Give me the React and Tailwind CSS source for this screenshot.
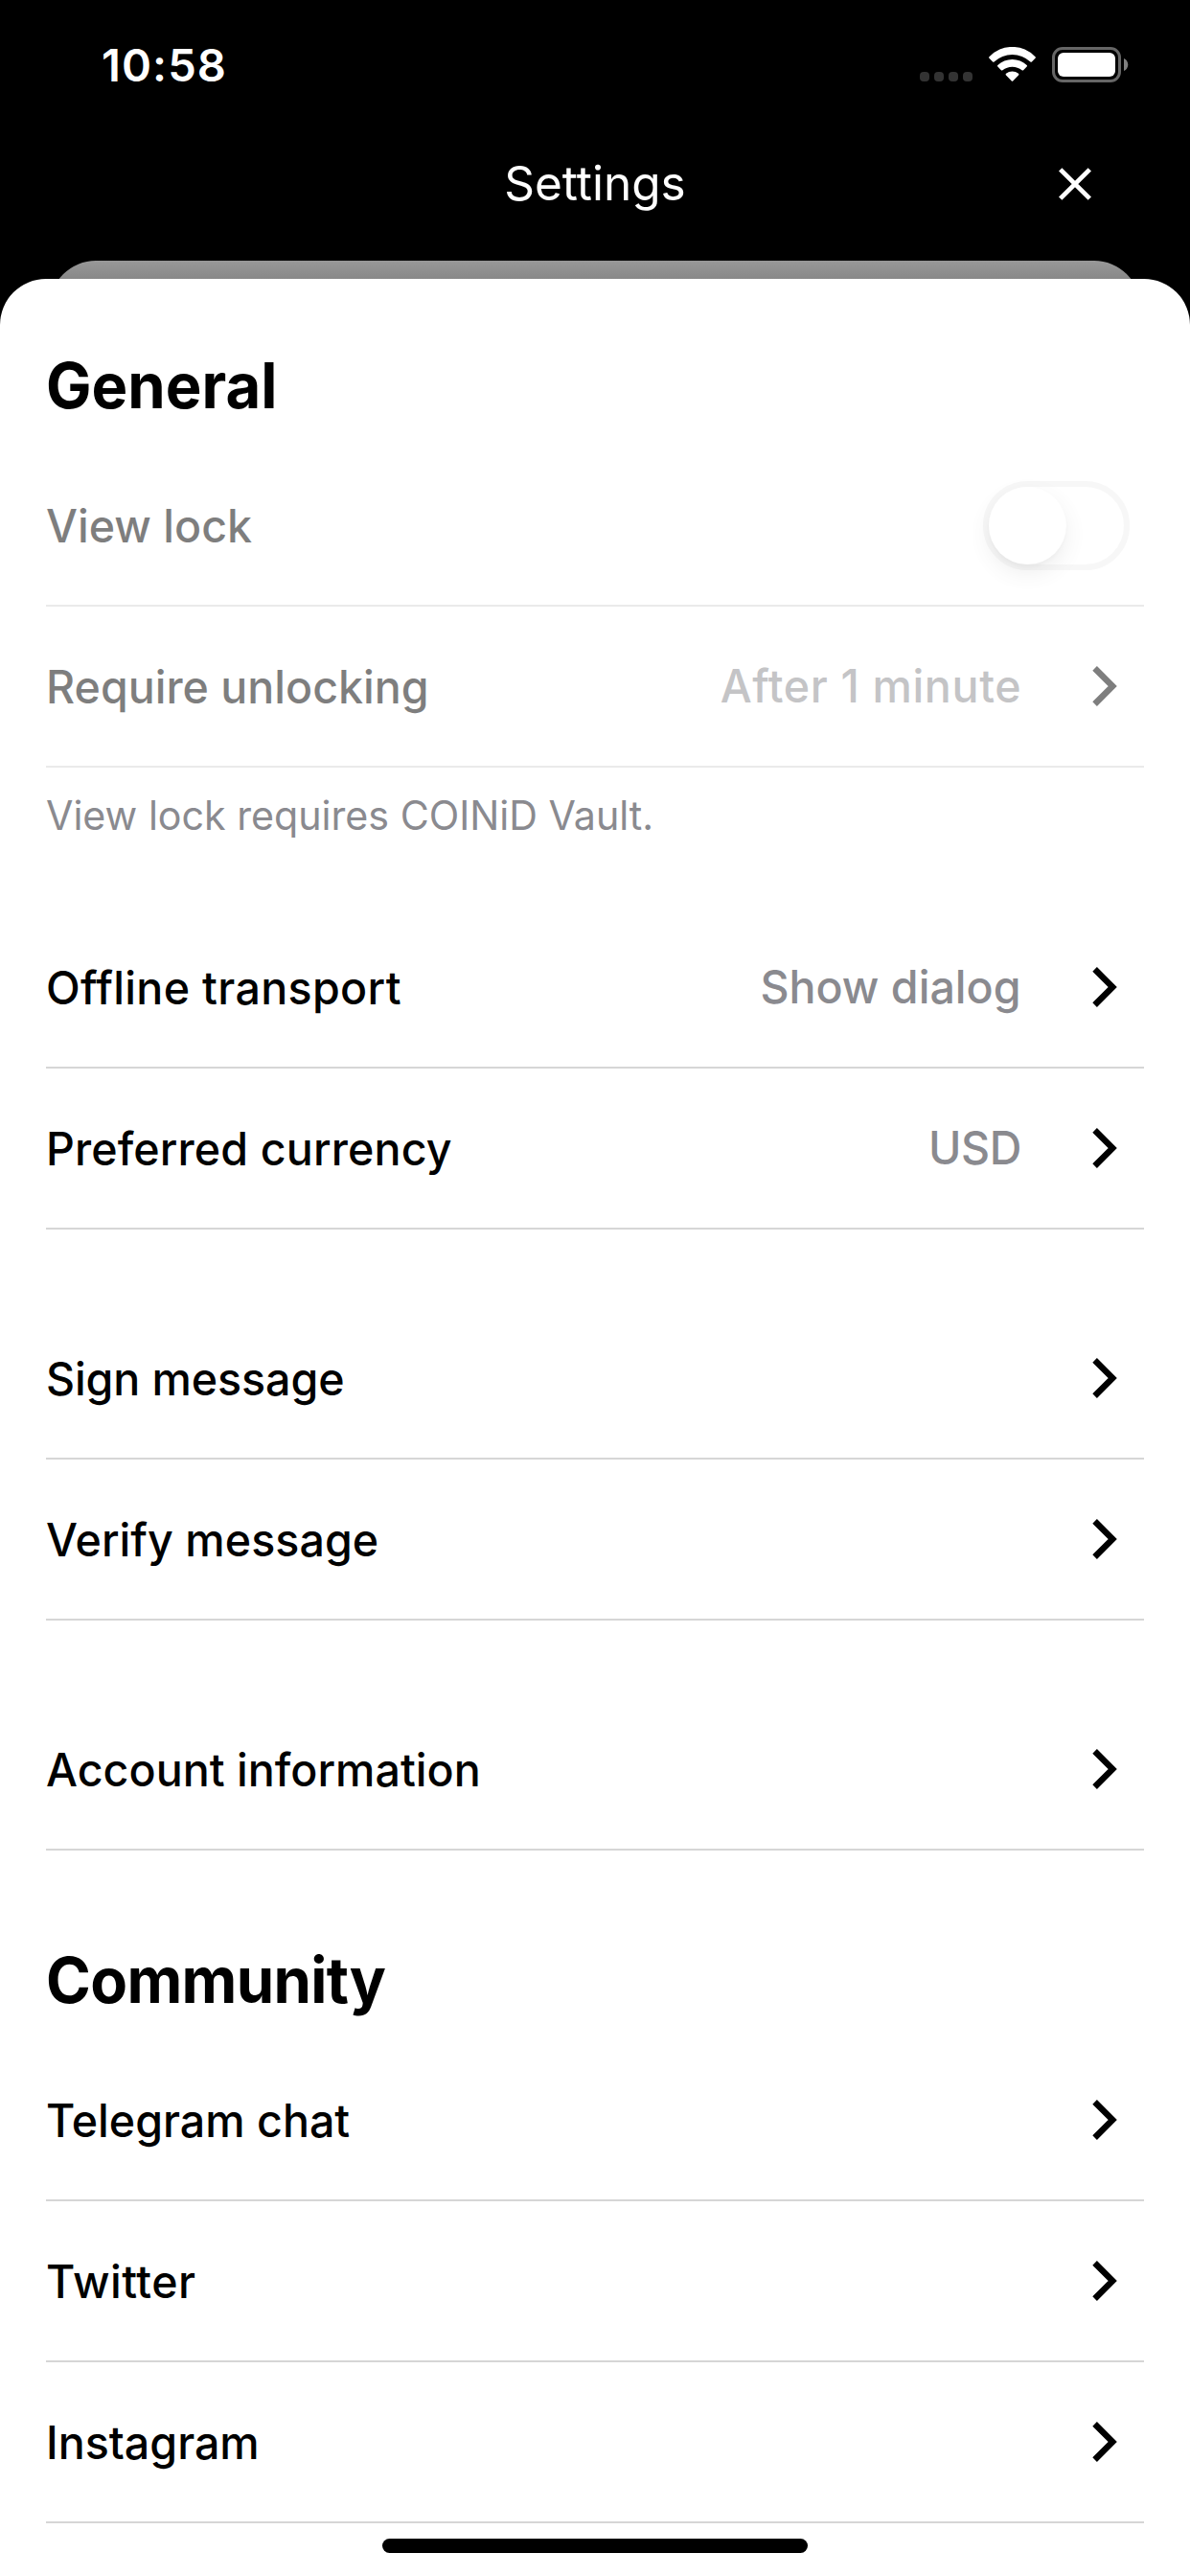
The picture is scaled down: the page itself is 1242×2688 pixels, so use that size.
function WifiIcon() {
  return (
    <svg width="49" height="36" viewBox="0 0 49 36" fill="#fff">
      <path d="M0.5 10.3A32.9 32.9 0 0 1 48.5 10.3Q49.3 11 48.5 11.8L44.9 15.4Q44.2 16.1 43.4 15.4A27.8 27.8 0 0 0 5.6 15.4Q4.8 16.1 4.1 15.4L0.5 11.8Q-0.3 11 0.5 10.3Z" />
      <path d="M9.3 19A22 22 0 0 1 39.7 19Q40.5 19.8 39.7 20.6L36.1 24.2Q35.4 24.9 34.6 24.2A16.2 16.2 0 0 0 14.4 24.2Q13.6 24.9 12.9 24.2L9.3 20.6Q8.5 19.8 9.3 19Z" />
      <path d="M18 27.8A10.2 10.2 0 0 1 31 27.8Q31.8 28.6 31 29.4L25.2 35.4Q24.5 36.1 23.8 35.4L18 29.4Q17.2 28.6 18 27.8Z" />
    </svg>
  );
}

function Battery() {
  return (
    <div className="flex items-center">
      <div className="h-[37px] w-[72px] rounded-[11px] border-[3px] border-[#666] p-[3px]">
        <div className="h-[25px] w-[60px] rounded-[6px] bg-white" />
      </div>
      <svg className="ml-[3px]" width="5" height="13" viewBox="0 0 5 13" fill="#808080">
        <path d="M0 0C2.6 1.1 4.3 3.6 4.3 6.5C4.3 9.4 2.6 11.9 0 13Z" />
      </svg>
    </div>
  );
}

function StatusBar() {
  return (
    <div className="flex h-[115px] items-start justify-between pl-[106px] pr-[64px]">
      <div className="pt-[39px] text-[47px] leading-[57px] font-semibold tracking-[1.1px]">10:58</div>
      <div className="flex items-start gap-[17px] pt-[49px]">
        <div className="mt-[26px] flex gap-[5px]">
          {[0, 1, 2, 3].map((dot) => (
            <div key={dot} className="size-[10px] rounded-[4px] bg-[#333]" />
          ))}
        </div>
        <WifiIcon />
        <Battery />
      </div>
    </div>
  );
}

function Header() {
  return (
    <div className="grid h-[157px] grid-cols-[1fr_auto_1fr] items-start">
      <div />
      <h1 className="pt-[46px] text-[49.5px] leading-[60px] font-normal">Settings</h1>
      <button className="mt-[59px] mr-[102px] justify-self-end">
        <svg width="36" height="36" viewBox="0 0 36 36" fill="none" stroke="#fff" strokeWidth="4.8">
          <path d="M2.7 2.9L33.3 33.1M33.3 2.9L2.7 33.1" />
        </svg>
      </button>
    </div>
  );
}

function Chevron() {
  return (
    <svg className="mt-[62px] mr-7 shrink-0" width="26" height="42" viewBox="0 0 26 42" fill="none" stroke="#000" strokeWidth="6.5">
      <path d="M2.6 2.4L21.2 21L2.6 39.6" />
    </svg>
  );
}

function Toggle() {
  return (
    <div className="mt-[37px] mr-[15px] h-[93px] w-[153px] rounded-full border-[6px] border-[#f0f0f0]">
      <div className="size-[81px] rounded-full bg-white shadow-[0_9px_20px_rgba(0,0,0,0.12),0_3px_3px_rgba(0,0,0,0.04)]" />
    </div>
  );
}

function Row({ label, spacing = "", value, valueSpacing = "", disabled = false, children }) {
  return (
    <div className={`flex h-[168px] items-start border-b-2 border-[#d6d6d6] ${disabled ? "opacity-50" : ""}`}>
      <div className={`mt-[54px] grow origin-left scale-x-97 text-[48px] leading-[59px] font-medium whitespace-nowrap ${spacing}`}>
        {label}
      </div>
      {value && (
        <div className={`mt-[53px] mr-[74px] origin-right scale-x-97 text-[48px] leading-[59px] font-medium whitespace-nowrap text-[#8a8a8f] ${valueSpacing}`}>
          {value}
        </div>
      )}
      {children || <Chevron />}
    </div>
  );
}

export default function App() {
  return (
    <div className="relative flex h-[2688px] w-[1242px] flex-col overflow-hidden bg-black font-[Inter,sans-serif] text-white">
      <StatusBar />
      <Header />
      <div className="mx-[52px] h-[67px] shrink-0 rounded-t-[48px] bg-linear-to-b from-[#989898] from-0% to-[#888] to-[19px]" />
      <main className="-mt-12 grow rounded-t-[48px] bg-white px-12 pt-[71px] text-black">
        <h2 className="mb-[23px] origin-left scale-x-96 text-[66px] leading-[80px] font-bold">General</h2>
        <Row label="View lock" disabled>
          <Toggle />
        </Row>
        <Row label="Require unlocking" value="After 1 minute" valueSpacing="tracking-[0.65px]" disabled />
        <p className="mt-6 origin-left scale-x-98 text-[42px] leading-[51px] text-[#8a8a8f]">View lock requires COINiD Vault.</p>

        <section className="mt-[71px]">
          <Row label="Offline transport" spacing="tracking-[0.35px]" value="Show dialog" />
          <Row label="Preferred currency" spacing="tracking-[0.15px]" value="USD" valueSpacing="tracking-[-0.4px]" />
        </section>
        <section className="mt-[72px]">
          <Row label="Sign message" spacing="tracking-[-0.1px]" />
          <Row label="Verify message" spacing="tracking-[0.05px]" />
        </section>
        <section className="mt-[72px]">
          <Row label="Account information" spacing="tracking-[0.03px]" />
        </section>

        <h2 className="mt-[95px] mb-[23px] origin-left scale-x-96 text-[66px] leading-[80px] font-bold tracking-[-0.7px]">Community</h2>
        <Row label="Telegram chat" />
        <Row label="Twitter" spacing="tracking-[0.5px]" />
        <Row label="Instagram" />
      </main>
      <div className="absolute bottom-6 left-1/2 h-[15px] w-[444px] -translate-x-1/2 rounded-full bg-black" />
    </div>
  );
}
